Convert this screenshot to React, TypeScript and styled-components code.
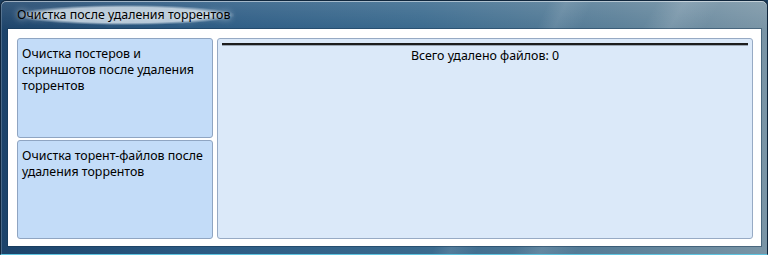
import { createGlobalStyle, styled } from 'styled-components';

const GlobalStyle = createGlobalStyle`
  html,
  body {
    margin: 0;
    padding: 0;
    background: #1b3d5e;
  }

  body {
    font-family: 'Noto Sans', 'Open Sans', sans-serif;
    font-size: 12.4px;
    color: #000;
  }
`;

interface SectionInfo {
  id: number;
  title: string;
}

const sections: SectionInfo[] = [
  { id: 1, title: 'Очистка постеров и скриншотов после удаления торрентов' },
  { id: 2, title: 'Очистка торент-файлов после удаления торрентов' },
];

function App() {
  const deletedCount = 0;

  return (
    <>
      <GlobalStyle />
      <Window>
        <TitleBar>
          <TitleText>Очистка после удаления торрентов</TitleText>
        </TitleBar>

        <ClientArea>
          <SideColumn>
            {sections.map((section) => (
              <SidePanel key={section.id}>{section.title}</SidePanel>
            ))}
          </SideColumn>

          <ResultPanel>
            <Separator />
            <ResultText>Всего удалено файлов: {deletedCount}</ResultText>
          </ResultPanel>
        </ClientArea>
      </Window>
    </>
  );
}

const Window = styled.div`
  display: flex;
  flex-direction: column;

  width: 768px;
  height: 255px;
  box-sizing: border-box;
  padding: 0 6px 8px 7px;

  border: 1px solid #10263c;
  border-bottom-color: #5fc4e0;
  border-radius: 6px 6px 0 0;

  background:
    linear-gradient(115deg, transparent 62%, rgba(255, 255, 255, 0.1) 64%, transparent 67%),
    linear-gradient(120deg, transparent 72%, rgba(255, 255, 255, 0.12) 75%, transparent 79%),
    linear-gradient(to bottom, rgba(255, 255, 255, 0.12), transparent 30px),
    linear-gradient(to right, #1c436a 0%, #2b5a83 25%, #3a6a8e 55%, #5a7f98 80%, #7a95a6 100%);
  box-shadow: inset 0 1px 0 rgba(255, 255, 255, 0.5), inset 1px 0 0 rgba(255, 255, 255, 0.2);
  overflow: hidden;
`;

const TitleBar = styled.div`
  display: flex;
  align-items: center;

  height: 28px;
  padding-left: 9px;
`;

const TitleText = styled.span`
  padding: 1px 4px 2px 0;

  font-size: 12.4px;
  color: #000;

  background: radial-gradient(ellipse at center, rgba(214, 226, 236, 0.8) 55%, rgba(214, 226, 236, 0) 72%);
  text-shadow: 0 0 6px rgba(255, 255, 255, 0.9);
`;

const ClientArea = styled.div`
  flex: 1;
  display: flex;

  padding: 9px 8px 7px 9px;

  gap: 4px;

  background: #ffffff;
  box-shadow: 0 0 0 1px rgba(20, 50, 80, 0.45);
`;

const SideColumn = styled.div`
  display: flex;
  flex-direction: column;

  width: 196px;

  gap: 2px;
`;

const SidePanel = styled.div`
  flex: 1;

  padding: 7px 6px 0 4px;

  line-height: 16px;

  background: #c3dcf8;
  border: 1px solid #8fa5c2;
  border-radius: 3px;
`;

const ResultPanel = styled.div`
  flex: 1;
  display: flex;
  flex-direction: column;

  padding: 4px 4px 0 4px;

  background: #dbe9f9;
  border: 1px solid #97aac4;
  border-radius: 3px;
`;

const Separator = styled.div`
  height: 2px;

  background: #1d1d1d;
  border-bottom: 1px solid #9aa6b4;
`;

const ResultText = styled.p`
  margin: 2px 0 0;

  text-align: center;
  line-height: 16px;
`;

export default App;
